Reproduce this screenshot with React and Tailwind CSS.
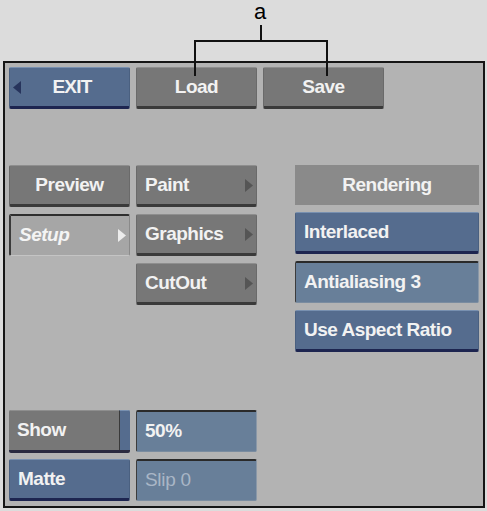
import React from 'react';

const font = { fontFamily: '"Liberation Sans", Arial, sans-serif' };

const raised = {
  gray: 'bg-[#777777] border-t border-t-[#8e8e8e] border-b-[3px] border-b-[#3a3a3a] border-x border-x-[#6a6a6a]',
  blue: 'bg-[#556c8e] border-t border-t-[#7890b0] border-b-[3px] border-b-[#1d2550] border-x border-x-[#4a6080]',
  field: 'bg-[#687f99] border-t-2 border-t-[#2a2a2a] border-l border-l-[#3c3c3c] border-r border-r-[#8a98a8] border-b border-b-[#7a8ca0]',
};

const Arrow = ({ color = '#555555', dir = 'right' }) => (
  <svg width="8" height="13" viewBox="0 0 8 13" className="shrink-0">
    {dir === 'right' ? <path d="M0 0 L8 6.5 L0 13 Z" fill={color} /> : <path d="M8 0 L0 6.5 L8 13 Z" fill={color} />}
  </svg>
);

const Btn = ({ kind = 'gray', children, center, arrow, className = '' }) => (
  <div
    className={`h-[42px] flex items-center rounded-[2px] px-[8px] text-[19px] font-bold tracking-[-0.5px] text-[#f2f2f2] ${raised[kind]} ${center ? 'justify-center' : 'justify-between'} ${arrow ? 'pr-[3px]' : ''} ${className}`}
  >
    <span>{children}</span>
    {arrow && <Arrow />}
  </div>
);

export default function App() {
  return (
    <div className="relative w-[487px] h-[511px] bg-[#dcdcdc] overflow-hidden" style={font}>
      <div className="h-[61px]" />
      <div className="mx-[3px] w-[482px] h-[447px] border-2 border-[#151515] bg-[#b3b3b3] flex flex-col px-[4px] pt-[4px] pb-[4px]">
        {/* top row */}
        <div className="flex gap-[6px]">
          <div className={`w-[121px] h-[42px] flex items-center rounded-[2px] pl-[3px] text-[19px] font-bold tracking-[-0.8px] text-[#f2f2f2] ${raised.blue}`}>
            <Arrow color="#27345c" dir="left" />
            <span className="flex-1 text-center pr-[6px]">EXIT</span>
          </div>
          <Btn center className="w-[121px]">Load</Btn>
          <Btn center className="w-[121px]">Save</Btn>
        </div>

        {/* middle */}
        <div className="mt-[56px] flex items-start">
          <div className="grid grid-cols-[121px_121px] content-start gap-x-[6px] gap-y-[7px]">
            <Btn center>Preview</Btn>
            <Btn arrow>Paint</Btn>
            <div className="h-[42px] flex items-center justify-between rounded-[2px] px-[8px] pr-[3px] text-[19px] font-bold italic tracking-[-0.5px] text-[#f4f4f4] bg-[#a6a6a6] border-t-2 border-t-[#2e2e2e] border-l-2 border-l-[#3a3a3a] border-b border-b-[#c4c4c4] border-r border-r-[#8a8a8a]">
              <span>Setup</span>
              <Arrow color="#ececec" />
            </div>
            <Btn arrow>Graphics</Btn>
            <div />
            <Btn arrow>CutOut</Btn>
          </div>
          <div className="ml-[38px] w-[185px] flex flex-col gap-[7px]">
            <div className="h-[40px] flex items-center justify-center bg-[#8a8a8a] text-[19px] font-bold tracking-[-0.5px] text-[#f2f2f2]">
              Rendering
            </div>
            <Btn kind="blue">Interlaced</Btn>
            <Btn kind="field">Antialiasing 3</Btn>
            <Btn kind="blue">Use Aspect Ratio</Btn>
          </div>
        </div>

        <div className="flex-1" />

        {/* bottom */}
        <div className="grid grid-cols-[121px_121px] gap-x-[6px] gap-y-[6px] mb-[1px]">
          <div className="h-[43px] flex rounded-[2px] overflow-hidden border-b-[3px] border-b-[#2a2a40]">
            <div className="flex-1 flex items-center px-[8px] bg-[#777777] border-t border-t-[#8e8e8e] text-[19px] font-bold tracking-[-0.5px] text-[#f2f2f2]">
              Show
            </div>
            <div className="w-[11px] bg-[#556c8e] border-t border-t-[#7890b0] border-l border-l-[#3a3a3a]" />
          </div>
          <Btn kind="field">50%</Btn>
          <Btn kind="blue">Matte</Btn>
          <div className={`h-[42px] flex items-center rounded-[2px] px-[8px] text-[19px] tracking-[-0.3px] text-[#a9b6c6] ${raised.field}`}>
            Slip 0
          </div>
        </div>
      </div>

      {/* callout */}
      <div className="absolute left-[254px] top-[1px] text-[22px] leading-[22px] text-black">
        a
      </div>
      <svg className="absolute left-0 top-0" width="487" height="80" viewBox="0 0 487 80">
        <path d="M261 25 V41 M195 41 H327 M195 40 V76 M327 40 V76" stroke="#111" strokeWidth="2" fill="none" />
      </svg>
    </div>
  );
}
